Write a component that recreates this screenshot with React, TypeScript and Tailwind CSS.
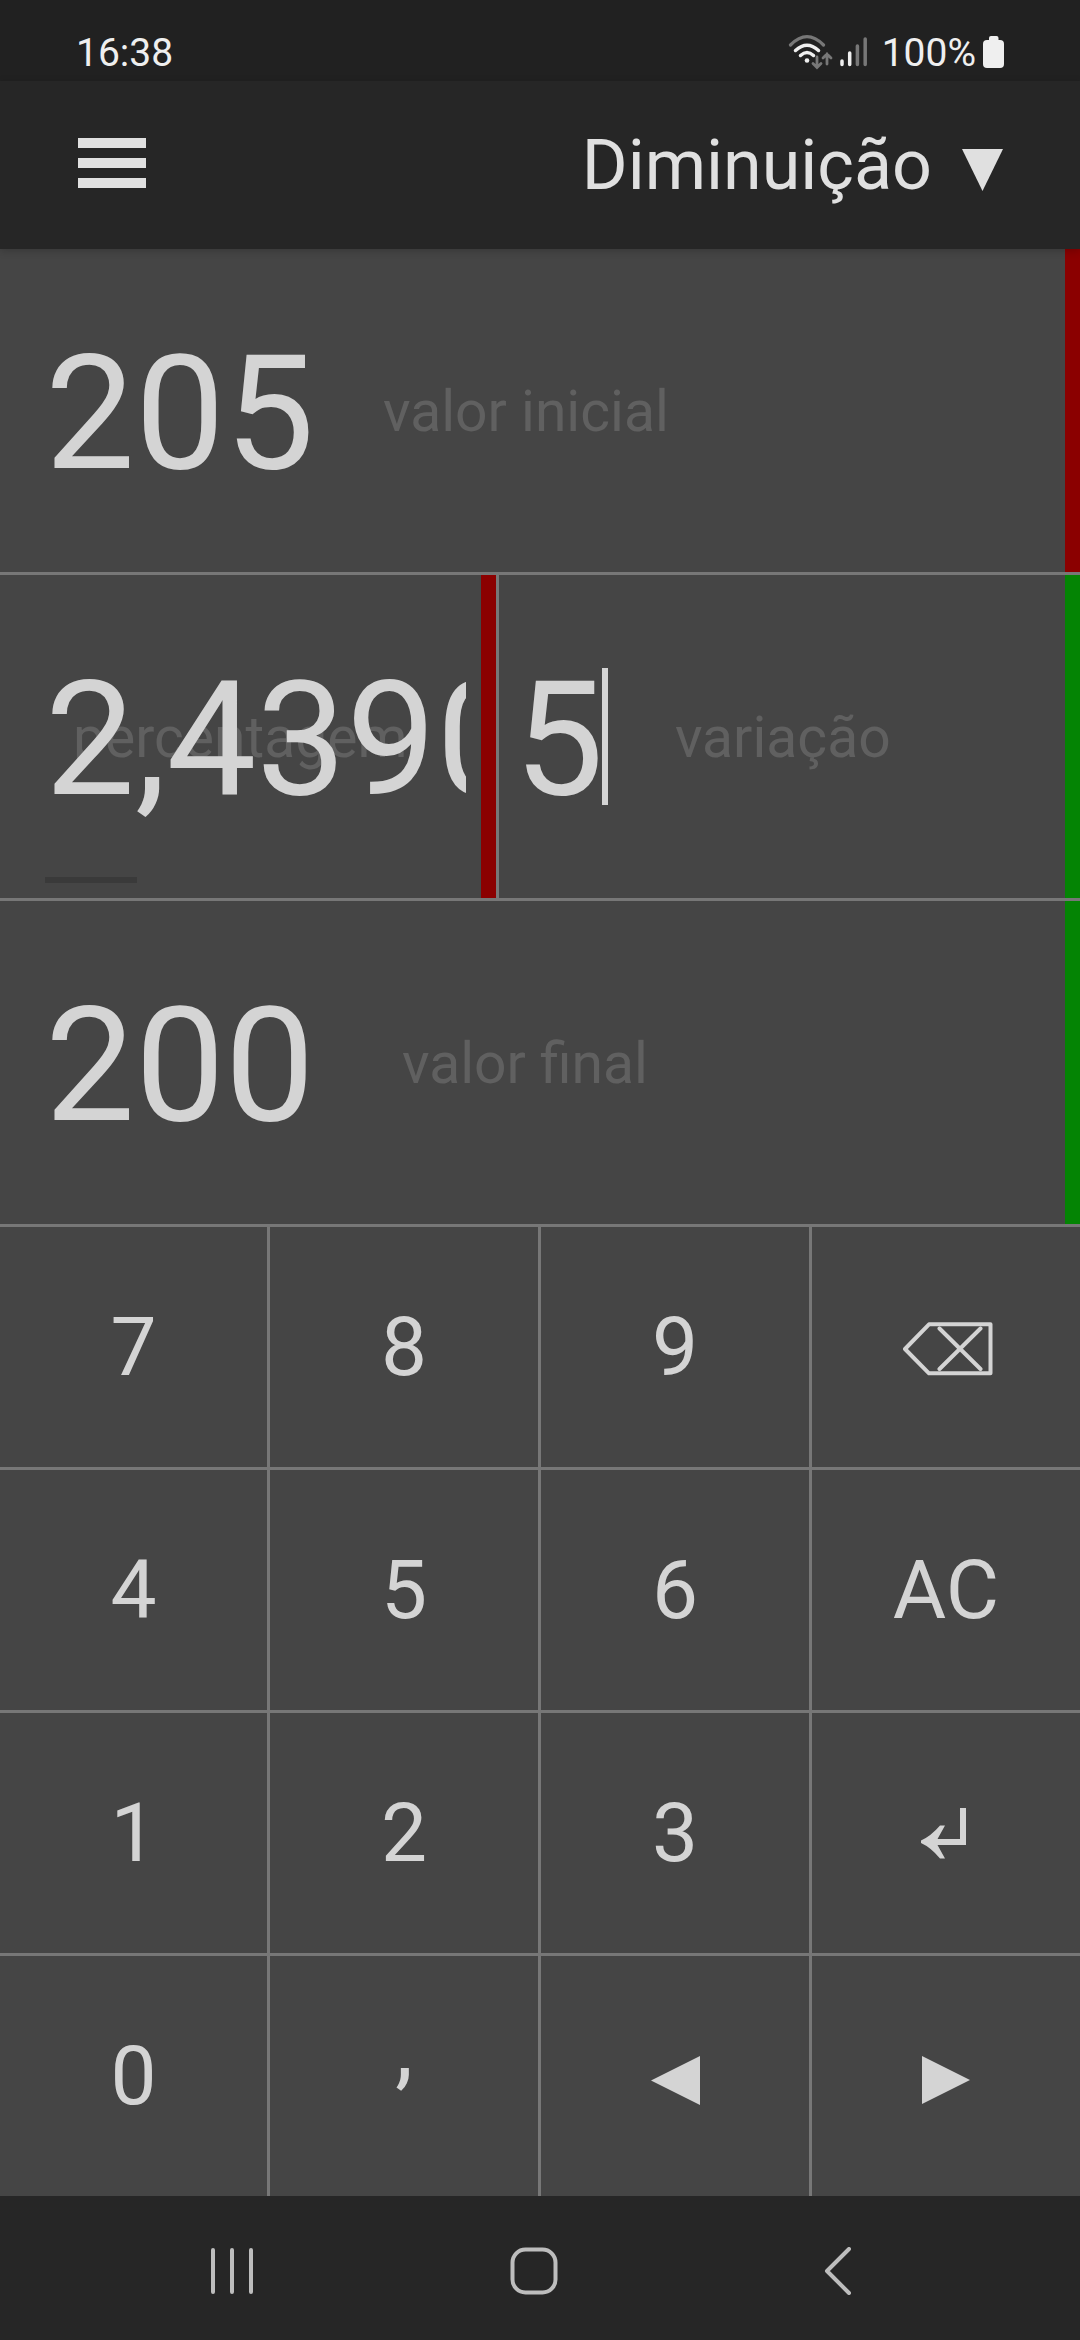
import type { ReactNode } from "react";

type FieldProps = {
  value: string;
  label: string;
  bar: string;
  labelClass: string;
};

function StatusBar() {
  return (
    <div className="flex h-[81px] items-start justify-between bg-[#212121] px-[76px] pt-[29px] text-[39px] leading-[46px] text-[#efefef]">
      <span className="mt-px">16:38</span>
      <div className="flex items-start">
        <svg className="mt-[5px]" width="46" height="36" viewBox="0 0 46 36" fill="none" strokeLinecap="round">
          <path d="M3.500 11Q20 -5.500 36.500 11" stroke="#777" strokeWidth="3.200" />
          <path d="M8.500 16.500Q20 6 31.500 16.500" stroke="#efefef" strokeWidth="3.500" />
          <path d="M13.500 21.500Q20 15.500 26.500 21.500" stroke="#efefef" strokeWidth="3.500" />
          <circle cx="20" cy="26.500" r="2.300" fill="#efefef" />
          <path d="M30 23v10M26 29.500l4 4 4-4M40 30V20M36 24l4-4 4 4" stroke="#777" strokeWidth="2.800" />
        </svg>
        <svg className="ml-[7px] mt-[7px]" width="28" height="32" viewBox="0 0 28 32" strokeWidth="3.500" strokeLinecap="round">
          <path d="M2 25v3.500M9.700 17v11.500" stroke="#efefef" />
          <path d="M17.400 10v18.500M25.200 3v25.500" stroke="#777" />
        </svg>
        <span className="ml-[14px] mt-px">100%</span>
        <svg className="ml-[7px] mt-[7px]" width="21" height="32" viewBox="0 0 21 32" fill="#efefef">
          <rect x="6" width="9.500" height="8" rx="2" />
          <rect y="4" width="21" height="28" rx="4" />
        </svg>
      </div>
    </div>
  );
}

function Header() {
  return (
    <header className="relative z-10 flex h-[168px] items-center justify-between bg-[#262626] pl-[78px] pr-[77px] shadow-[0_2px_8px_rgba(0,0,0,0.2)]">
      <div className="flex flex-col gap-[10px] pb-[4px]">
        <div className="h-[10px] w-[68px] bg-[#e0e0e0]" />
        <div className="h-[10px] w-[68px] bg-[#e0e0e0]" />
        <div className="h-[10px] w-[68px] bg-[#e0e0e0]" />
      </div>
      <div className="flex items-center text-[70px] leading-[82px] text-[#e0e0e0]">
        <span>Diminuição</span>
        <svg className="ml-[30px] mt-[9px]" width="41" height="42" viewBox="0 0 41 42" fill="#e0e0e0">
          <path d="M0 0h41L20.500 42z" />
        </svg>
      </div>
    </header>
  );
}

function Field({ value, label, bar, labelClass }: FieldProps) {
  return (
    <div className="flex h-[326px] border-b-[3px] border-[#777]">
      <div className="flex flex-1 items-center pl-[45px]">
        <span className="w-[270px] pt-[6px] text-[160px] leading-none">{value}</span>
        <span className={labelClass}>{label}</span>
      </div>
      <div className={bar} />
    </div>
  );
}

function Key({ children }: { children: ReactNode }) {
  return <button className="flex h-[240px] items-center justify-center bg-[#454545]">{children}</button>;
}

function Keypad() {
  return (
    <div className="grid grid-cols-[267px_268px_268px_268px] gap-[3px] bg-[#777] text-[82px] leading-none">
      <Key>7</Key>
      <Key>8</Key>
      <Key>9</Key>
      <Key>
        <svg className="ml-[3px] mt-[3px]" width="90" height="54" viewBox="0 0 90 54" fill="none" stroke="#d4d4d4" strokeWidth="4" strokeLinecap="round" strokeLinejoin="round">
          <path d="M2 27L26 2.300h61.500v49H26zM36.500 6.500l41 40.500M77.500 6.500L36.500 47" />
        </svg>
      </Key>
      <Key>4</Key>
      <Key>5</Key>
      <Key>6</Key>
      <Key>AC</Key>
      <Key>1</Key>
      <Key>2</Key>
      <Key>3</Key>
      <Key>
        <svg className="mr-[4px]" width="46" height="51" viewBox="0 0 46 51" fill="#d4d4d4">
          <path d="M39 0h6v37H16.500L24 50.500h-5Q10 39.500 0 35v-2.500Q10 28 19 17.500h5L16.500 31H39z" />
        </svg>
      </Key>
      <Key>0</Key>
      <Key>
        <span className="pb-[56px] text-[90px]">,</span>
      </Key>
      <Key>
        <svg className="mt-[9px]" width="49" height="49" viewBox="0 0 49 49" fill="#d4d4d4">
          <path d="M49 0v49L0 24.500z" />
        </svg>
      </Key>
      <Key>
        <svg className="mt-[8px]" width="48" height="48" viewBox="0 0 48 48" fill="#d4d4d4">
          <path d="M0 0v48l48-24z" />
        </svg>
      </Key>
    </div>
  );
}

function NavBar() {
  return (
    <nav className="flex h-[144px] items-center bg-[#262626] pl-[210px] pt-[6px]">
      <svg width="44" height="48" viewBox="0 0 44 48" stroke="#bdbdbd" strokeWidth="4" strokeLinecap="round">
        <path d="M3 3v42M22 3v42M41 3v42" />
      </svg>
      <svg className="ml-[256px]" width="48" height="48" viewBox="0 0 48 48" fill="none" stroke="#bdbdbd" strokeWidth="4">
        <rect x="2.500" y="2.500" width="43" height="43" rx="13" />
      </svg>
      <svg className="ml-[266px]" width="28" height="48" viewBox="0 0 28 48" fill="none" stroke="#bdbdbd" strokeWidth="4" strokeLinecap="round" strokeLinejoin="round">
        <path d="M25 2L3 24l22 22" />
      </svg>
    </nav>
  );
}

export default function App() {
  return (
    <div className="h-[2340px] w-[1080px] overflow-hidden bg-[#454545] font-['Roboto',sans-serif] text-[#d4d4d4]">
      <StatusBar />
      <Header />
      <Field value="205" label="valor inicial" bar="w-[15px] bg-[#8b0000]" labelClass="ml-[68px] pt-[3px] text-[57px] text-[#606060]" />
      <div className="flex h-[326px] border-b-[3px] border-[#777]">
        <div className="relative flex w-[499px] items-center border-r-[3px] border-[#777] pl-[45px]">
          <span className="absolute left-[73px] pt-[3px] text-[57px] text-[#606060]">percentagem</span>
          <span className="relative w-[421px] overflow-hidden pt-[6px] text-[160px] leading-[188px]">2,4390</span>
          <div className="absolute bottom-[15px] left-[45px] h-[6px] w-[92px] bg-[#3a3a3a]" />
          <div className="ml-auto w-[15px] self-stretch bg-[#8b0000]" />
        </div>
        <div className="flex flex-1 items-center pl-[15px]">
          <span className="pt-[6px] text-[160px] leading-none">5</span>
          <div className="-ml-[2px] h-[137px] w-[6px] bg-[#d4d4d4]" />
          <span className="ml-[67px] pt-[3px] text-[57px] text-[#606060]">variação</span>
        </div>
        <div className="w-[15px] bg-[#048404]" />
      </div>
      <Field value="200" label="valor final" bar="w-[15px] bg-[#048404]" labelClass="ml-[87px] pt-[3px] text-[57px] text-[#606060]" />
      <Keypad />
      <NavBar />
    </div>
  );
}
